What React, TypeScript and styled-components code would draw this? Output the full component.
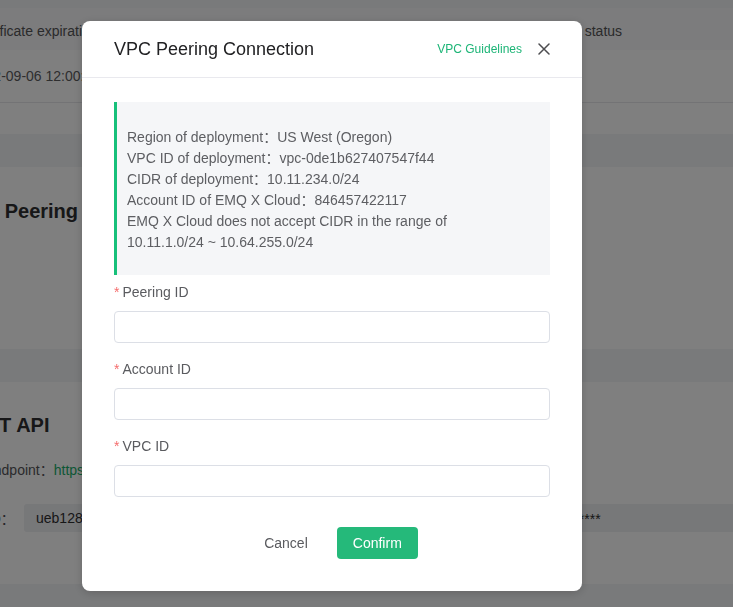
import React from "react";
import styled, { createGlobalStyle } from "styled-components";

const GlobalStyle = createGlobalStyle`
  html, body { margin: 0; padding: 0; }
  body {
    width: 733px;
    height: 607px;
    overflow: hidden;
    background: #f3f4f7;
    font-family: "Liberation Sans", Arial, "Noto Sans CJK SC", sans-serif;
    -webkit-font-smoothing: antialiased;
  }
  * { box-sizing: border-box; }
`;

/* ---------- background page ---------- */
const Page = styled.div`
  margin-left: -74px;
  width: 900px;
  padding-top: 8px;
  display: flex;
  flex-direction: column;
  gap: 33px;
`;

const Card = styled.section<{ $h: number; $pt?: number }>`
  background: #ffffff;
  height: ${(p) => p.$h}px;
  padding: ${(p) => p.$pt ?? 0}px 32px 0 32px;
  display: flex;
  flex-direction: column;
`;

const TableRow = styled.div<{ $head?: boolean }>`
  display: grid;
  grid-template-columns: 540px 1fr;
  height: ${(p) => (p.$head ? 42 : 53)}px;
  padding-top: ${(p) => (p.$head ? 4 : 0)}px;
  align-items: center;
  background: ${(p) => (p.$head ? "#f8f8fa" : "#ffffff")};
  border-bottom: ${(p) => (p.$head ? "none" : "1px solid #e6e7eb")};
  font-size: 14px;
  color: ${(p) => (p.$head ? "#555557" : "#5c5c5e")};
  white-space: nowrap;
`;

const Cell = styled.div`
  padding: 0 12px;
  overflow: hidden;
`;

const SectionTitle = styled.h2`
  margin: 0;
  font-size: 20px;
  line-height: 28px;
  font-weight: 700;
  color: #2e2e30;
`;

const InfoLine = styled.div`
  margin-top: 20px;
  font-size: 14px;
  line-height: 22px;
  color: #555558;
  white-space: nowrap;
`;

const GreenText = styled.span`
  color: #1aae6b;
`;

const KeyRow = styled.div`
  margin-top: 23px;
  display: flex;
  align-items: center;
  font-size: 14px;
  color: #4a4a4c;
  white-space: nowrap;
`;

const KeyLabel = styled.span`
  width: 66px;
  flex: 0 0 66px;
`;

const KeyBox = styled.div`
  flex: 1;
  height: 28px;
  background: #eef0f3;
  border-radius: 3px;
  padding: 0 12px;
  display: flex;
  align-items: center;
  color: #2e2e30;
`;

const KeyValue = styled.span`
  flex: 0 0 416px;
`;

/* ---------- modal ---------- */
const Overlay = styled.div`
  position: fixed;
  inset: 0;
  background: rgba(0, 0, 0, 0.5);
  display: flex;
  align-items: flex-start;
  padding: 21px 0 0 82px;
`;

const Modal = styled.div`
  width: 500px;
  background: #ffffff;
  border-radius: 8px;
  box-shadow: 0 2px 10px rgba(0, 0, 0, 0.18);
  display: flex;
  flex-direction: column;
`;

const Header = styled.div`
  height: 57px;
  padding: 0 32px;
  display: flex;
  align-items: center;
  justify-content: space-between;
  border-bottom: 1px solid #e9e9ee;
`;

const Title = styled.h1`
  margin: 0;
  font-size: 18px;
  font-weight: 400;
  color: #222224;
  line-height: 24px;
  padding-bottom: 1px;
`;

const HeaderActions = styled.div`
  display: flex;
  align-items: center;
  gap: 16px;
`;

const GuideLink = styled.a`
  font-size: 12px;
  color: #1db577;
  text-decoration: none;
  cursor: pointer;
`;

const CloseButton = styled.button`
  border: none;
  background: none;
  padding: 0;
  width: 12px;
  height: 12px;
  display: flex;
  cursor: pointer;
  color: #4d4d50;
`;

const Body = styled.div`
  padding: 24px 32px 0 32px;
  display: flex;
  flex-direction: column;
`;

const InfoBox = styled.div`
  background: #f5f6f8;
  border-left: 3px solid #17c07a;
  padding: 25px 12px 22px 10px;
  font-size: 14px;
  line-height: 21px;
  color: #5d5e62;
`;

const InfoRow = styled.div`
  white-space: nowrap;
`;

const FormItem = styled.div<{ $first?: boolean }>`
  margin-top: ${(p) => (p.$first ? 6 : 15)}px;
  display: flex;
  flex-direction: column;
  gap: 8px;
`;

const Label = styled.label`
  font-size: 14px;
  line-height: 22px;
  color: #5a5b5f;
  display: flex;
  align-items: center;
`;

const Star = styled.span`
  color: #f56c6c;
  margin-right: 3px;
  font-size: 14px;
`;

const Input = styled.input`
  width: 100%;
  height: 32px;
  border: 1px solid #dcdfe6;
  border-radius: 4px;
  outline: none;
  padding: 0 12px;
  font-size: 14px;
  font-family: inherit;
  background: #fff;
`;

const Footer = styled.div`
  padding: 30px 0 32px 0;
  display: flex;
  justify-content: center;
  gap: 13px;
  padding-left: 2px;
`;

const Button = styled.button<{ $primary?: boolean }>`
  height: 32px;
  padding: 0 16px;
  border-radius: 4px;
  border: none;
  font-size: 14px;
  font-family: inherit;
  cursor: pointer;
  background: ${(p) => (p.$primary ? "#25b97a" : "transparent")};
  color: ${(p) => (p.$primary ? "#ffffff" : "#5a5b5f")};
`;

const CloseIcon = () => (
  <svg width="12" height="12" viewBox="0 0 12 12" fill="none">
    <path d="M1 1L11 11M11 1L1 11" stroke="currentColor" strokeWidth="1.5" strokeLinecap="round" />
  </svg>
);

const info = [
  "Region of deployment：US West (Oregon)",
  "VPC ID of deployment：vpc-0de1b627407547f44",
  "CIDR of deployment：10.11.234.0/24",
  "Account ID of EMQ X Cloud：846457422117",
  "EMQ X Cloud does not accept CIDR in the range of",
  "10.11.1.0/24 ~ 10.64.255.0/24",
];

const fields = ["Peering ID", "Account ID", "VPC ID"];

export default function App() {
  return (
    <>
      <GlobalStyle />
      <Page>
        <Card $h={126}>
          <TableRow $head>
            <Cell>Certificate expiration time</Cell>
            <Cell>Connection status</Cell>
          </TableRow>
          <TableRow>
            <Cell>2022-09-06 12:00:00</Cell>
            <Cell>Running</Cell>
          </TableRow>
        </Card>
        <Card $h={182} $pt={30}>
          <SectionTitle>VPC Peering</SectionTitle>
        </Card>
        <Card $h={202} $pt={29}>
          <SectionTitle>REST API</SectionTitle>
          <InfoLine>
            API Endpoint：<GreenText>https://lb8a2f36.us-west-2.emqx.cloud:8443/api/v4</GreenText>
          </InfoLine>
          <KeyRow>
            <KeyLabel>App ID：</KeyLabel>
            <KeyBox>
              <KeyValue>ueb1285d9a0b7f</KeyValue>
              <span>App Secret：************</span>
            </KeyBox>
          </KeyRow>
        </Card>
      </Page>

      <Overlay>
        <Modal>
          <Header>
            <Title>VPC Peering Connection</Title>
            <HeaderActions>
              <GuideLink>VPC Guidelines</GuideLink>
              <CloseButton aria-label="close">
                <CloseIcon />
              </CloseButton>
            </HeaderActions>
          </Header>
          <Body>
            <InfoBox>
              {info.map((line) => (
                <InfoRow key={line}>{line}</InfoRow>
              ))}
            </InfoBox>
            {fields.map((f, i) => (
              <FormItem key={f} $first={i === 0}>
                <Label>
                  <Star>*</Star>
                  {f}
                </Label>
                <Input />
              </FormItem>
            ))}
          </Body>
          <Footer>
            <Button>Cancel</Button>
            <Button $primary>Confirm</Button>
          </Footer>
        </Modal>
      </Overlay>
    </>
  );
}
